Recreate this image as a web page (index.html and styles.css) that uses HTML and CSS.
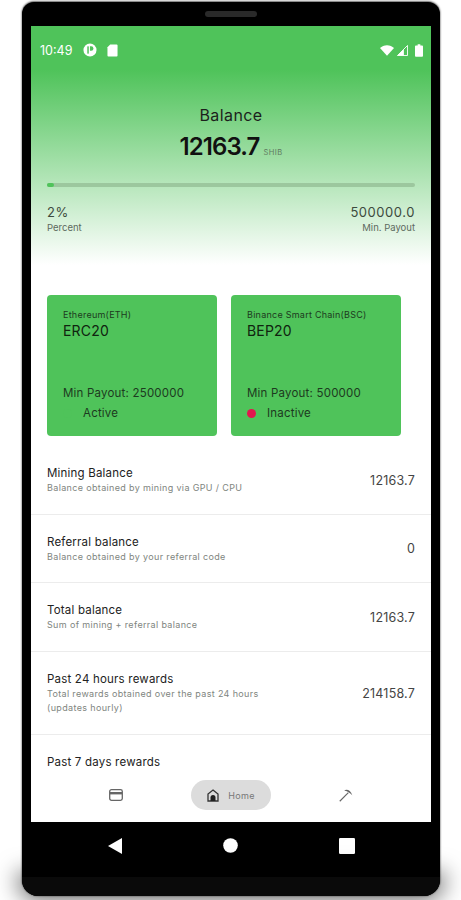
FILE: index.html
```html
<!DOCTYPE html>
<html lang="en">
<head>
    <meta charset="UTF-8">
    <meta name="viewport" content="width=device-width, initial-scale=1.0">
    <title>Balance</title>
    <link rel="stylesheet" href="styles.css">
</head>
<body>
    <div class="phone">
        <div class="speaker-bar"><span class="speaker"></span></div>
        <div class="screen">
            <div class="hero">
                <!-- Status bar -->
                <div class="status-bar">
                    <span class="clock">10:49</span>
                    <svg class="status-icon" width="14" height="14" viewBox="0 0 15 15"><circle cx="7.5" cy="7.5" r="7" fill="#fff"/><rect x="4.6" y="3.6" width="1.6" height="7.8" fill="#4fc35a"/><path d="M7.4 3.6h1.4a2.4 2.4 0 0 1 0 4.8H7.4z" fill="#4fc35a"/></svg>
                    <svg class="status-icon sd" width="11" height="13" viewBox="0 0 12 14"><path d="M3.5 0.5H10.5a1 1 0 0 1 1 1V12.5a1 1 0 0 1-1 1H1.5a1 1 0 0 1-1-1V3.5z" fill="#fff"/></svg>
                    <span class="status-right">
                        <svg width="14" height="11" viewBox="0 0 16 12"><path d="M0 3.2C2 1.3 4.8 0 8 0s6 1.3 8 3.2L8 12z" fill="#fff"/></svg>
                        <svg width="11" height="11" viewBox="0 0 12 12"><path d="M11.5 0.5V11.5H0.5z" fill="none" stroke="#fff" stroke-width="1"/><path d="M7.5 4.5V11.5H0.5z" fill="#fff"/></svg>
                        <svg class="battery" width="8" height="13" viewBox="0 0 9 14"><path d="M3 0h3v1.4h2a1 1 0 0 1 1 1V13a1 1 0 0 1-1 1H1a1 1 0 0 1-1-1V2.4a1 1 0 0 1 1-1h2z" fill="#fff"/></svg>
                    </span>
                </div>
                <div class="balance-title">Balance</div>
                <div class="balance-amount">12163.7<span class="unit">SHIB</span></div>
                <div class="progress"><div class="progress-fill" style="width: 2%"></div></div>
                <div class="progress-info">
                    <div>
                        <div class="info-value">2%</div>
                        <div class="info-label">Percent</div>
                    </div>
                    <div class="align-right">
                        <div class="info-value">500000.0</div>
                        <div class="info-label">Min. Payout</div>
                    </div>
                </div>
            </div>
            <!-- Network cards -->
            <div class="cards">
                <div class="card">
                    <div class="card-chain">Ethereum(ETH)</div>
                    <div class="card-name">ERC20</div>
                    <div class="card-payout">Min Payout: 2500000</div>
                    <div class="card-state"><span class="dot dot-active"></span>Active</div>
                </div>
                <div class="card">
                    <div class="card-chain">Binance Smart Chain(BSC)</div>
                    <div class="card-name">BEP20</div>
                    <div class="card-payout">Min Payout: 500000</div>
                    <div class="card-state"><span class="dot dot-inactive"></span>Inactive</div>
                </div>
            </div>
            <!-- Balance rows -->
            <div class="rows">
                <div class="row">
                    <div class="row-text">
                        <div class="row-title">Mining Balance</div>
                        <div class="row-sub">Balance obtained by mining via GPU / CPU</div>
                    </div>
                    <div class="row-value">12163.7</div>
                </div>
                <div class="row">
                    <div class="row-text">
                        <div class="row-title">Referral balance</div>
                        <div class="row-sub">Balance obtained by your referral code</div>
                    </div>
                    <div class="row-value">0</div>
                </div>
                <div class="row">
                    <div class="row-text">
                        <div class="row-title">Total balance</div>
                        <div class="row-sub">Sum of mining + referral balance</div>
                    </div>
                    <div class="row-value">12163.7</div>
                </div>
                <div class="row">
                    <div class="row-text">
                        <div class="row-title">Past 24 hours rewards</div>
                        <div class="row-sub">Total rewards obtained over the past 24 hours<br>(updates hourly)</div>
                    </div>
                    <div class="row-value">214158.7</div>
                </div>
                <div class="row">
                    <div class="row-text">
                        <div class="row-title">Past 7 days rewards</div>
                    </div>
                </div>
            </div>
            <!-- Bottom navigation -->
            <nav class="bottom-nav">
                <svg width="14" height="12" viewBox="0 0 14 12"><rect x="0.7" y="0.7" width="12.6" height="10.6" rx="1.8" fill="none" stroke="#666" stroke-width="1.3"/><rect x="1" y="3" width="12" height="2.4" fill="#666"/></svg>
                <div class="nav-home">
                    <svg width="12" height="13" viewBox="0 0 12 13"><path d="M6 1L11 5V12H1V5z" fill="none" stroke="#333" stroke-width="1.3"/><path d="M3.5 12V8.5a2.5 2.5 0 0 1 5 0V12z" fill="#222"/></svg>
                    <span>Home</span>
                </div>
                <svg width="14" height="14" viewBox="0 0 15 15"><path d="M0.8 14.2L10 5" fill="none" stroke="#666" stroke-width="1.2"/><path d="M5.5 2.6C8.5 0.8 12.5 2.5 14.2 7.8C12 5.4 9.8 3.6 5.5 2.6z" fill="#666"/></svg>
            </nav>
        </div>
        <!-- Android buttons -->
        <div class="system-bar">
            <svg width="14" height="16" viewBox="0 0 14 16"><path d="M14 0V16L0 8z" fill="#fff"/></svg>
            <svg width="15" height="15" viewBox="0 0 15 15"><circle cx="7.5" cy="7.5" r="7.3" fill="#fff"/></svg>
            <svg width="16" height="16" viewBox="0 0 16 16"><rect width="16" height="16" rx="1.2" fill="#fff"/></svg>
        </div>
        <div class="chin"></div>
    </div>
</body>
</html>
```

FILE: styles.css
```css
:root {
    --green: #4fc35a;
    --text: #1c1f1c;
    --muted: #808580;
}
html, body {
    height: 100%;
}
body {
    margin: 0;
    background: white;
    font-family: 'Inter', sans-serif;
    color: var(--text);
    overflow: hidden;
}
.phone {
    width: 418px;
    height: 894px;
    margin: 2px 0 0 22px;
    background: #000;
    border-radius: 12px 12px 16px 16px;
    box-shadow: 0 -1px 2px rgba(0,0,0,0.5), 0 0 2px rgba(0,0,0,0.5);
    display: flex;
    flex-direction: column;
    align-items: center;
}
.speaker-bar {
    height: 24px;
    width: 100%;
    display: flex;
    justify-content: center;
    padding-top: 9px;
    box-sizing: border-box;
}
.speaker {
    width: 52px;
    height: 6px;
    border-radius: 3px;
    background: #2a2a2a;
}
.screen {
    position: relative;
    width: 400px;
    height: 796px;
    background: white;
    overflow: hidden;
    flex: none;
}
.hero {
    height: 240px;
    padding: 0 16px;
    box-sizing: border-box;
    background: linear-gradient(to bottom, var(--green) 0, var(--green) 44px, white 239px);
}
.status-bar {
    display: flex;
    align-items: center;
    height: 16px;
    padding-top: 16px;
    margin: 0 -8px 0 -7px;
    color: white;
}
.clock {
    font-size: 12.5px;
    font-weight: 400;
    margin-right: 11px;
}
.status-icon.sd {
    margin-left: 10px;
}
.status-right {
    margin-left: auto;
    display: flex;
    align-items: center;
    gap: 3px;
}
.battery {
    margin-left: 4px;
}
.balance-title {
    margin-top: 47px;
    text-align: center;
    font-size: 16px;
    line-height: 20px;
    letter-spacing: 0.4px;
}
.balance-amount {
    margin-top: 9px;
    text-align: center;
    font-size: 24px;
    line-height: 26px;
    font-weight: 600;
    letter-spacing: -0.9px;
    color: #111;
}
.unit {
    font-size: 7.5px;
    font-weight: 400;
    letter-spacing: 0.4px;
    margin-left: 4px;
    color: #5f7a60;
}
.progress {
    margin-top: 17px;
    height: 4px;
    border-radius: 2px;
    background: #9cc79e;
}
.progress-fill {
    height: 100%;
    border-radius: 2px;
    background: var(--green);
}
.progress-info {
    display: flex;
    justify-content: space-between;
    margin-top: 17px;
}
.align-right {
    text-align: right;
}
.info-value {
    font-size: 13px;
    line-height: 16px;
    color: #3c4a3d;
    letter-spacing: 0.55px;
}
.info-label {
    font-size: 9.5px;
    line-height: 13px;
    margin-top: 1px;
    color: #5d6a5e;
}
.cards {
    display: flex;
    gap: 14px;
    padding: 29px 16px 10px;
}
.card {
    width: 170px;
    height: 141px;
    box-sizing: border-box;
    padding: 14px 16px 0;
    background: var(--green);
    border-radius: 4px;
    color: #1d3a20;
}
.card-chain {
    font-size: 9px;
    line-height: 12px;
    letter-spacing: 0.25px;
    white-space: nowrap;
}
.card-name {
    font-size: 14px;
    line-height: 18px;
    margin-top: 1px;
    letter-spacing: 0.2px;
    color: #10240f;
}
.card-payout {
    font-size: 11.5px;
    line-height: 16px;
    margin-top: 45px;
    letter-spacing: 0.2px;
    white-space: nowrap;
}
.card-state {
    display: flex;
    align-items: center;
    font-size: 11.5px;
    line-height: 16px;
    margin-top: 4px;
    letter-spacing: 0.2px;
}
.dot {
    width: 9px;
    height: 9px;
    border-radius: 50%;
    margin-right: 11px;
    flex: none;
}
.dot-active {
    background: var(--green);
}
.dot-inactive {
    background: #e3174e;
}
.row {
    display: flex;
    align-items: center;
    justify-content: space-between;
    padding: 19px 16px 18.7px;
    border-bottom: 1px solid #ececec;
}
.row:last-child {
    border-bottom: none;
}
.row-title {
    font-size: 11.5px;
    line-height: 16px;
    letter-spacing: 0.2px;
    color: #222;
}
.row-sub {
    font-size: 9px;
    line-height: 14px;
    letter-spacing: 0.35px;
    color: var(--muted);
}
.row-value {
    font-size: 12.5px;
    letter-spacing: 0.2px;
    color: #444;
}
.bottom-nav {
    position: absolute;
    left: 0;
    right: 0;
    bottom: 0;
    height: 52px;
    background: white;
    display: flex;
    align-items: center;
    justify-content: space-around;
    padding: 0 44px 2px;
    box-sizing: border-box;
}
.nav-home {
    width: 80px;
    height: 30px;
    border-radius: 15px;
    background: #dcdcdc;
    display: flex;
    align-items: center;
    justify-content: center;
    gap: 9px;
    font-size: 9px;
    font-weight: 400;
    letter-spacing: 0.3px;
    color: #777;
}
.system-bar {
    width: 400px;
    height: 47px;
    padding: 0 76px 0 77px;
    box-sizing: border-box;
    display: flex;
    align-items: center;
    justify-content: space-between;
}
.chin {
    margin-top: auto;
    width: 100%;
    height: 19px;
    background: #0a0a0a;
    border-radius: 0 0 16px 16px;
    box-shadow: 0 0 22px 5px rgba(0,0,0,0.55);
}
```
